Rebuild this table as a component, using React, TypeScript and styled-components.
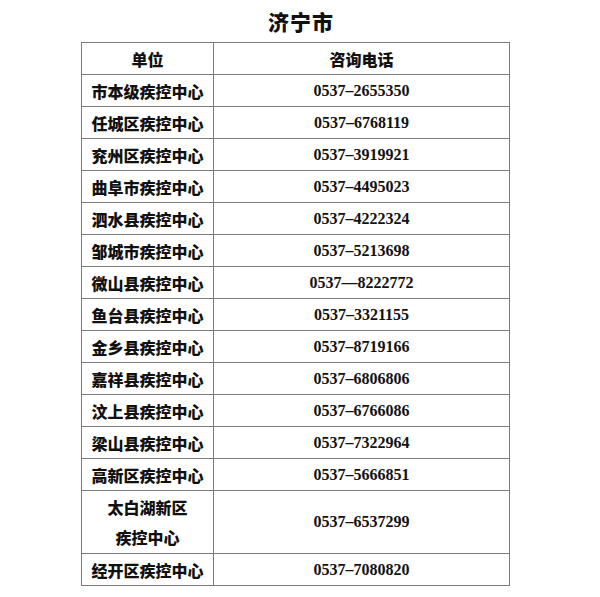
import React from "react";
import styled, { createGlobalStyle } from "styled-components";

const GlobalStyle = createGlobalStyle`
  html, body {
    margin: 0;
    padding: 0;
    background: #ffffff;
  }
`;

const Page = styled.div`
  width: 600px;
  height: 597px;
  background: #ffffff;
  color: #111111;
  font-family: "Liberation Serif", "Noto Sans CJK SC", serif;
  font-weight: 700;
`;

const Title = styled.h1`
  margin: 0;
  height: 42px;
  padding-left: 2px;
  box-sizing: border-box;
  display: flex;
  align-items: center;
  justify-content: center;
  font-family: "Noto Sans CJK SC", sans-serif;
  font-size: 21px;
  font-weight: 900;
  letter-spacing: 1px;
`;

const Table = styled.table`
  margin-left: 81px;
  width: 429px;
  border-collapse: collapse;
  table-layout: fixed;
`;

const Cell = styled.td<{ $tall?: boolean; $phone?: boolean }>`
  border: 1px solid #7a7a7a;
  height: ${(p) => (p.$tall ? 62 : 31)}px;
  padding: 0;
  text-align: center;
  vertical-align: middle;
  font-size: 16px;
  line-height: ${(p) => (p.$tall ? "30px" : "20px")};
  font-family: ${(p) =>
    p.$phone
      ? `"Liberation Serif", "Noto Sans CJK SC", serif`
      : `"Noto Sans CJK SC", sans-serif`};
  font-weight: ${(p) => (p.$phone ? 700 : 900)};
`;

const Head = styled(Cell).attrs({ as: "th" })``;

const UnitCol = styled.col`
  width: 132px;
`;

const rows: { unit: string[]; phone: string }[] = [
  { unit: ["市本级疾控中心"], phone: "0537–2655350" },
  { unit: ["任城区疾控中心"], phone: "0537–6768119" },
  { unit: ["兖州区疾控中心"], phone: "0537–3919921" },
  { unit: ["曲阜市疾控中心"], phone: "0537–4495023" },
  { unit: ["泗水县疾控中心"], phone: "0537–4222324" },
  { unit: ["邹城市疾控中心"], phone: "0537–5213698" },
  { unit: ["微山县疾控中心"], phone: "0537—8222772" },
  { unit: ["鱼台县疾控中心"], phone: "0537–3321155" },
  { unit: ["金乡县疾控中心"], phone: "0537–8719166" },
  { unit: ["嘉祥县疾控中心"], phone: "0537–6806806" },
  { unit: ["汶上县疾控中心"], phone: "0537–6766086" },
  { unit: ["梁山县疾控中心"], phone: "0537–7322964" },
  { unit: ["高新区疾控中心"], phone: "0537–5666851" },
  { unit: ["太白湖新区", "疾控中心"], phone: "0537–6537299" },
  { unit: ["经开区疾控中心"], phone: "0537–7080820" },
];

const App = () => (
  <Page>
    <GlobalStyle />
    <Title>济宁市</Title>
    <Table>
      <colgroup>
        <UnitCol />
        <col />
      </colgroup>
      <thead>
        <tr>
          <Head>单位</Head>
          <Head>咨询电话</Head>
        </tr>
      </thead>
      <tbody>
        {rows.map((r) => (
          <tr key={r.phone}>
            <Cell $tall={r.unit.length > 1}>
              {r.unit.map((line) => (
                <div key={line}>{line}</div>
              ))}
            </Cell>
            <Cell $tall={r.unit.length > 1} $phone>
              {r.phone}
            </Cell>
          </tr>
        ))}
      </tbody>
    </Table>
  </Page>
);

export default App;
